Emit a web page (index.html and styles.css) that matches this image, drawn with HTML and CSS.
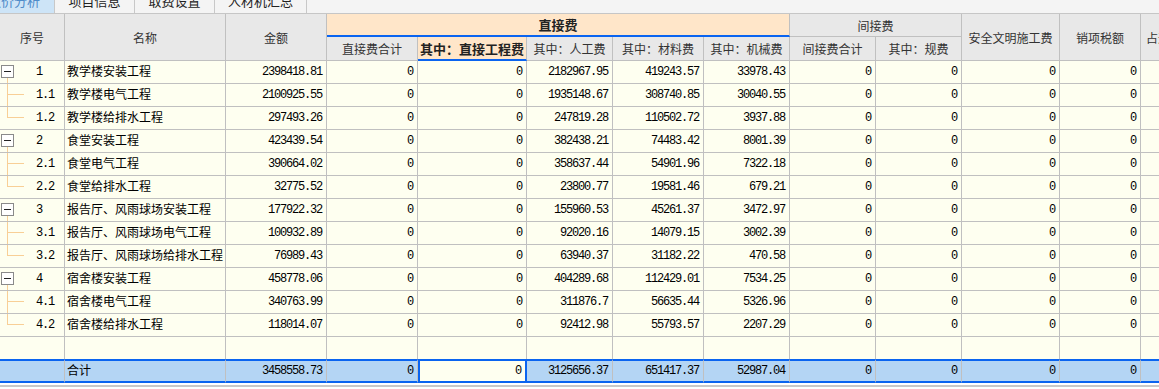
FILE: index.html
```html
<!DOCTYPE html>
<html lang="zh-CN">
<head>
<meta charset="utf-8">
<title>造价分析</title>
<link rel="stylesheet" href="styles.css">
</head>
<body>
<div class="tabs">
  <div class="tab active w81"><span>造价分析</span></div>
  <div class="tab w80"><span>项目信息</span></div>
  <div class="tab w80"><span>取费设置</span></div>
  <div class="tab w92"><span>人材机汇总</span></div>
</div>
<div class="viewport">
<table class="grid">
  <colgroup>
    <col class="c0"><col class="c1"><col class="c2"><col class="c3"><col class="c4"><col class="c5"><col class="c6"><col class="c7"><col class="c8"><col class="c9"><col class="c10"><col class="c11"><col class="c12">
  </colgroup>
  <thead>
    <tr class="h1">
      <th rowspan="2">序号</th>
      <th rowspan="2">名称</th>
      <th rowspan="2">金额</th>
      <th colspan="5" class="group">直接费</th>
      <th colspan="2">间接费</th>
      <th rowspan="2">安全文明施工费</th>
      <th rowspan="2">销项税额</th>
      <th rowspan="2">占造价比例(%)</th>
    </tr>
    <tr class="h2">
      <th>直接费合计</th>
      <th class="selh">其中：直接工程费</th>
      <th>其中：人工费</th>
      <th>其中：材料费</th>
      <th>其中：机械费</th>
      <th>间接费合计</th>
      <th>其中：规费</th>
    </tr>
  </thead>
  <tbody>
    <tr><td class="seq parent"><div class="si"><span class="box"></span><span class="sn">1</span></div></td><td class="nm">教学楼安装工程</td><td class="n">2398418.81</td><td class="n">0</td><td class="n">0</td><td class="n">2182967.95</td><td class="n">419243.57</td><td class="n">33978.43</td><td class="n">0</td><td class="n">0</td><td class="n">0</td><td class="n">0</td><td></td></tr>
    <tr><td class="seq mid"><div class="si"><span></span><span class="sn">1.1</span></div></td><td class="nm">教学楼电气工程</td><td class="n">2100925.55</td><td class="n">0</td><td class="n">0</td><td class="n">1935148.67</td><td class="n">308740.85</td><td class="n">30040.55</td><td class="n">0</td><td class="n">0</td><td class="n">0</td><td class="n">0</td><td></td></tr>
    <tr><td class="seq last"><div class="si"><span></span><span class="sn">1.2</span></div></td><td class="nm">教学楼给排水工程</td><td class="n">297493.26</td><td class="n">0</td><td class="n">0</td><td class="n">247819.28</td><td class="n">110502.72</td><td class="n">3937.88</td><td class="n">0</td><td class="n">0</td><td class="n">0</td><td class="n">0</td><td></td></tr>
    <tr><td class="seq parent"><div class="si"><span class="box"></span><span class="sn">2</span></div></td><td class="nm">食堂安装工程</td><td class="n">423439.54</td><td class="n">0</td><td class="n">0</td><td class="n">382438.21</td><td class="n">74483.42</td><td class="n">8001.39</td><td class="n">0</td><td class="n">0</td><td class="n">0</td><td class="n">0</td><td></td></tr>
    <tr><td class="seq mid"><div class="si"><span></span><span class="sn">2.1</span></div></td><td class="nm">食堂电气工程</td><td class="n">390664.02</td><td class="n">0</td><td class="n">0</td><td class="n">358637.44</td><td class="n">54901.96</td><td class="n">7322.18</td><td class="n">0</td><td class="n">0</td><td class="n">0</td><td class="n">0</td><td></td></tr>
    <tr><td class="seq last"><div class="si"><span></span><span class="sn">2.2</span></div></td><td class="nm">食堂给排水工程</td><td class="n">32775.52</td><td class="n">0</td><td class="n">0</td><td class="n">23800.77</td><td class="n">19581.46</td><td class="n">679.21</td><td class="n">0</td><td class="n">0</td><td class="n">0</td><td class="n">0</td><td></td></tr>
    <tr><td class="seq parent"><div class="si"><span class="box"></span><span class="sn">3</span></div></td><td class="nm">报告厅、风雨球场安装工程</td><td class="n">177922.32</td><td class="n">0</td><td class="n">0</td><td class="n">155960.53</td><td class="n">45261.37</td><td class="n">3472.97</td><td class="n">0</td><td class="n">0</td><td class="n">0</td><td class="n">0</td><td></td></tr>
    <tr><td class="seq mid"><div class="si"><span></span><span class="sn">3.1</span></div></td><td class="nm">报告厅、风雨球场电气工程</td><td class="n">100932.89</td><td class="n">0</td><td class="n">0</td><td class="n">92020.16</td><td class="n">14079.15</td><td class="n">3002.39</td><td class="n">0</td><td class="n">0</td><td class="n">0</td><td class="n">0</td><td></td></tr>
    <tr><td class="seq last"><div class="si"><span></span><span class="sn">3.2</span></div></td><td class="nm">报告厅、风雨球场给排水工程</td><td class="n">76989.43</td><td class="n">0</td><td class="n">0</td><td class="n">63940.37</td><td class="n">31182.22</td><td class="n">470.58</td><td class="n">0</td><td class="n">0</td><td class="n">0</td><td class="n">0</td><td></td></tr>
    <tr><td class="seq parent"><div class="si"><span class="box"></span><span class="sn">4</span></div></td><td class="nm">宿舍楼安装工程</td><td class="n">458778.06</td><td class="n">0</td><td class="n">0</td><td class="n">404289.68</td><td class="n">112429.01</td><td class="n">7534.25</td><td class="n">0</td><td class="n">0</td><td class="n">0</td><td class="n">0</td><td></td></tr>
    <tr><td class="seq mid"><div class="si"><span></span><span class="sn">4.1</span></div></td><td class="nm">宿舍楼电气工程</td><td class="n">340763.99</td><td class="n">0</td><td class="n">0</td><td class="n">311876.7</td><td class="n">56635.44</td><td class="n">5326.96</td><td class="n">0</td><td class="n">0</td><td class="n">0</td><td class="n">0</td><td></td></tr>
    <tr><td class="seq last"><div class="si"><span></span><span class="sn">4.2</span></div></td><td class="nm">宿舍楼给排水工程</td><td class="n">118014.07</td><td class="n">0</td><td class="n">0</td><td class="n">92412.98</td><td class="n">55793.57</td><td class="n">2207.29</td><td class="n">0</td><td class="n">0</td><td class="n">0</td><td class="n">0</td><td></td></tr>
    <tr class="empty"><td></td><td></td><td></td><td></td><td></td><td></td><td></td><td></td><td></td><td></td><td></td><td></td><td></td></tr>
    <tr class="total"><td></td><td class="nm">合计</td><td class="n">3458558.73</td><td class="n">0</td><td class="n sel">0</td><td class="n">3125656.37</td><td class="n">651417.37</td><td class="n">52987.04</td><td class="n">0</td><td class="n">0</td><td class="n">0</td><td class="n">0</td><td></td></tr>
  </tbody>
</table>
</div>
<div class="footer"></div>
</body>
</html>
```

FILE: styles.css
```css
* { box-sizing: border-box; }
html, body { margin: 0; padding: 0; background: #fff; }
body {
  width: 1159px;
  height: 389px;
  overflow: hidden;
  font-family: "Noto Sans CJK SC", "Liberation Sans", sans-serif;
}

/* tab strip (cut off at top) */
.tabs {
  display: flex;
  height: 14px;
  background: #f4f4f4;
  border-bottom: 1px solid #c6c6c6;
  overflow: hidden;
}
.tab {
  flex: none;
  height: 13px;
  border-right: 1px solid #c8c8c8;
  font-size: 13px;
  line-height: 13px;
  color: #222;
  text-align: center;
}
.tab span { display: block; margin-top: -6px; }
.tab.active { background: #cde4f7; color: #4f8bc9; margin-left: -26px; }
.w81 { width: 81px; }
.w80 { width: 80px; }
.w92 { width: 92px; }

.viewport { width: 1159px; overflow: hidden; }

.grid {
  width: 1231px;
  border-collapse: separate;
  border-spacing: 0;
  table-layout: fixed;
}
.c0 { width: 65px; }
.c1 { width: 161px; }
.c2 { width: 101px; }
.c3 { width: 91px; }
.c4 { width: 109px; }
.c5 { width: 86px; }
.c6 { width: 91px; }
.c7 { width: 86px; }
.c8 { width: 86px; }
.c9 { width: 86px; }
.c10 { width: 98px; }
.c11 { width: 81px; }
.c12 { width: 90px; }

.grid th, .grid td {
  padding: 0;
  border-right: 1px solid #c0c0c0;
  border-bottom: 1px solid #c0c0c0;
  overflow: hidden;
  white-space: nowrap;
}

/* header */
.grid th {
  background: #e8e8e8;
  color: #333;
  font-weight: normal;
  font-size: 12px;
  text-align: center;
  vertical-align: middle;
}
.grid tr.h1 { height: 23px; }
.grid tr.h2 { height: 24px; }
.grid th.group {
  background: #ffe6c9;
  font-weight: bold;
  font-size: 13px;
  color: #222;
  border-bottom: 2px solid #0a64f0;
}
.grid th.selh {
  background: #ffe6c9;
  font-weight: bold;
  font-size: 13px;
  color: #222;
  border-bottom: 2px solid #0a64f0;
}

/* body */
.grid tbody tr { height: 23px; }
.grid td {
  background: #fefff0;
  color: #000;
  vertical-align: middle;
}
.grid td.nm { font-size: 12px; line-height: 14px; padding-left: 2px; padding-bottom: 2px; }
.grid td.n {
  font-family: "Liberation Mono", monospace;
  font-size: 12px;
  letter-spacing: -1.2px;
  text-align: right;
  padding-right: 4px;
}

/* tree column */
.si {
  display: grid;
  grid-template-columns: 36px auto;
  align-items: center;
  height: 22px;
}
.sn {
  font-family: "Liberation Mono", monospace;
  font-size: 12px;
  letter-spacing: -1.2px;
}
.box {
  width: 13px;
  height: 13px;
  margin-left: 1px;
  margin-top: -2px;
  border: 1px solid #8a8a8a;
  background: linear-gradient(#222, #222) center / 7px 1px no-repeat, #fff;
}
.seq.parent {
  background: linear-gradient(#f8cf96, #f8cf96) 7px 15px / 1px 100% no-repeat, #fefff0;
}
.seq.mid {
  background:
    linear-gradient(#f8cf96, #f8cf96) 7px 0 / 1px 100% no-repeat,
    linear-gradient(#f8cf96, #f8cf96) 7px 10px / 17px 1px no-repeat,
    #fefff0;
}
.seq.last {
  background:
    linear-gradient(#f8cf96, #f8cf96) 7px 0 / 1px 11px no-repeat,
    linear-gradient(#f8cf96, #f8cf96) 7px 10px / 17px 1px no-repeat,
    #fefff0;
}

.grid tr.empty { height: 22px; }
.grid tr.empty td { border-bottom: none; }

.grid tr.total { height: 24px; }
.grid tr.total td {
  background: #b4d5f4;
  border-top: 2px solid #0a64f0;
  border-bottom: 2px solid #0a64f0;
}
.grid tr.total td.sel {
  background: #fefff0;
  border: 2px solid #0a64f0;
}

.footer {
  margin-top: 2px;
  height: 2px;
  background: #c8c8c8;
}
```
